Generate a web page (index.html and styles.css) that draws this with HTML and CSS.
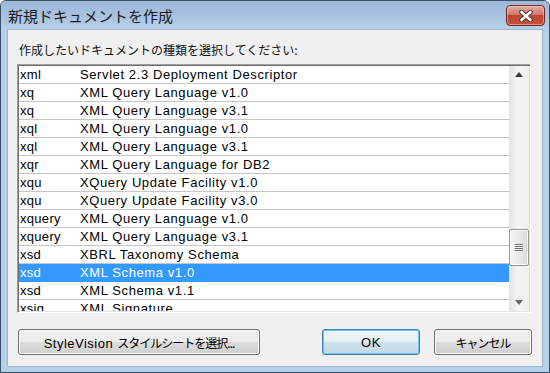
FILE: index.html
```html
<!DOCTYPE html>
<html lang="ja">
<head>
    <meta charset="UTF-8">
    <title>新規ドキュメントを作成</title>
    <link rel="stylesheet" href="styles.css">
</head>
<body>
    <div class="window">
        <div class="titlebar">
            <span class="title">新規ドキュメントを作成</span>
            <button class="close-btn" aria-label="閉じる">
                <svg width="16" height="12" viewBox="0 0 16 12">
                    <path d="M3.5 2 L12.5 10 M12.5 2 L3.5 10" stroke="#4a3a3a" stroke-width="4.6" stroke-linecap="round"/>
                    <path d="M3.5 2 L12.5 10 M12.5 2 L3.5 10" stroke="#ffffff" stroke-width="2.6" stroke-linecap="round"/>
                </svg>
            </button>
        </div>

        <div class="frame">
            <div class="client">
                <p class="prompt">作成したいドキュメントの種類を選択してください:</p>

                <div class="listbox">
                    <div class="rows">
                        <div class="row"><span class="ext">xml</span><span class="desc">Servlet 2.3 Deployment Descriptor</span></div>
                        <div class="row"><span class="ext">xq</span><span class="desc">XML Query Language v1.0</span></div>
                        <div class="row"><span class="ext">xq</span><span class="desc">XML Query Language v3.1</span></div>
                        <div class="row"><span class="ext">xql</span><span class="desc">XML Query Language v1.0</span></div>
                        <div class="row"><span class="ext">xql</span><span class="desc">XML Query Language v3.1</span></div>
                        <div class="row"><span class="ext">xqr</span><span class="desc">XML Query Language for DB2</span></div>
                        <div class="row"><span class="ext">xqu</span><span class="desc">XQuery Update Facility v1.0</span></div>
                        <div class="row"><span class="ext">xqu</span><span class="desc">XQuery Update Facility v3.0</span></div>
                        <div class="row"><span class="ext">xquery</span><span class="desc">XML Query Language v1.0</span></div>
                        <div class="row"><span class="ext">xquery</span><span class="desc">XML Query Language v3.1</span></div>
                        <div class="row"><span class="ext">xsd</span><span class="desc">XBRL Taxonomy Schema</span></div>
                        <div class="row selected"><span class="ext">xsd</span><span class="desc">XML Schema v1.0</span></div>
                        <div class="row"><span class="ext">xsd</span><span class="desc">XML Schema v1.1</span></div>
                        <div class="row"><span class="ext">xsig</span><span class="desc">XML Signature</span></div>
                    </div>
                    <div class="scrollbar">
                        <div class="arrow"><span class="tri-up"></span></div>
                        <div class="track">
                            <div class="thumb"><span class="grip"></span></div>
                        </div>
                        <div class="arrow"><span class="tri-down"></span></div>
                    </div>
                </div>

                <div class="actions">
                    <button class="btn btn-wide">StyleVision <span class="ja">スタイルシートを選択...</span></button>
                    <button class="btn btn-default">OK</button>
                    <button class="btn"><span class="ja">キャンセル</span></button>
                </div>
            </div>
        </div>
    </div>
</body>
</html>
```

FILE: styles.css
```css
body {
    margin: 0;
    background: #ffffff;
    font-family: "Liberation Sans", "Noto Sans CJK JP", sans-serif;
}

.window {
    width: 550px;
    height: 373px;
    box-sizing: border-box;
    border: 1px solid #3b4f66;
    border-radius: 6px 6px 0 0;
    background: #b7cfe8;
    display: flex;
    flex-direction: column;
    overflow: hidden;
}

.titlebar {
    height: 29px;
    flex-shrink: 0;
    display: flex;
    justify-content: space-between;
    padding: 0 4px 0 7px;
    background: linear-gradient(#9bb8d7, #aac5e2 60%, #b9d1ea);
}

.title {
    align-self: center;
    font-family: "Noto Sans CJK JP", sans-serif;
    font-size: 15px;
    line-height: 20px;
    color: #1b1b1b;
    margin-top: 1px;
}

.close-btn {
    margin-top: 4px;
    width: 39px;
    height: 21px;
    padding: 0;
    border: 1px solid #6a2a26;
    border-radius: 4px;
    background: linear-gradient(#e6aba2, #d07a6c 45%, #c0452f 50%, #c4523b);
    box-shadow: inset 0 0 0 1px rgba(255, 220, 210, 0.45);
    display: flex;
    align-items: center;
    justify-content: center;
}

.frame {
    flex: 1;
    padding: 0 7px 6px 7px;
    display: flex;
}

.client {
    flex: 1;
    background: #f0f0f0;
    box-shadow: 0 0 0 1px #9db3cb;
    padding: 0 10px 0 9px;
    display: flex;
    flex-direction: column;
}

.prompt {
    margin: 12px 0 6px 2px;
    font-family: "Noto Sans CJK JP", sans-serif;
    font-size: 12px;
    line-height: 16px;
    color: #111;
}

.listbox {
    height: 249px;
    box-sizing: border-box;
    border: 1px solid;
    border-color: #a0a0a0 #ffffff #ffffff #a0a0a0;
    box-shadow: inset 1px 1px 0 #6d6d6d, inset -1px -1px 0 #e3e3e3;
    padding: 1px;
    background: #ffffff;
    display: flex;
    margin-right: 1px;
}

.rows {
    flex: 1;
    overflow: hidden;
}

.row {
    height: 18px;
    box-sizing: border-box;
    border-bottom: 1px solid #c6c6c6;
    display: flex;
    font-size: 13px;
    line-height: 17px;
    letter-spacing: 0.6px;
    color: #000;
    white-space: nowrap;
}

.row.selected {
    background: #3399ff;
    border-bottom-color: #3399ff;
    color: #fff;
}

.ext {
    width: 60px;
    padding-left: 1px;
    letter-spacing: 0.3px;
}

.scrollbar {
    width: 20px;
    display: flex;
    flex-direction: column;
    background: linear-gradient(to right, #e4e4e4, #f4f4f4 45%, #eeeeee);
}

.arrow {
    height: 17px;
    display: flex;
    align-items: center;
    justify-content: center;
}

.tri-up {
    width: 0;
    height: 0;
    border-left: 4px solid transparent;
    border-right: 4px solid transparent;
    border-bottom: 5px solid #3a3a3a;
}

.tri-down {
    width: 0;
    height: 0;
    border-left: 4px solid transparent;
    border-right: 4px solid transparent;
    border-top: 5px solid #6a6a6a;
}

.track {
    flex: 1;
}

.thumb {
    margin-top: 146px;
    height: 37px;
    box-sizing: border-box;
    border: 1px solid #979797;
    border-radius: 2px;
    background: linear-gradient(to right, #f4f4f4, #e9e9e9 50%, #d8d8d8);
    box-shadow: inset 0 0 0 1px #fbfbfb;
    display: flex;
    align-items: center;
    justify-content: center;
}

.grip {
    width: 8px;
    height: 8px;
    background: repeating-linear-gradient(#6f6f6f 0 1px, #f6f6f6 1px 2px);
}

.actions {
    display: flex;
    margin-top: 16px;
    padding-left: 1px;
}

.btn {
    width: 98px;
    height: 26px;
    box-sizing: border-box;
    border: 1px solid #707070;
    border-radius: 3px;
    background: linear-gradient(#f2f2f2, #ebebeb 50%, #dddddd 50%, #cfcfcf);
    box-shadow: inset 0 0 0 1px #fbfbfb;
    font-family: "Liberation Sans", "Noto Sans CJK JP", sans-serif;
    font-size: 13px;
    font-weight: 400;
    letter-spacing: 0.5px;
    color: #000;
    padding: 0;
    margin-left: 14px;
}

.btn-wide {
    width: 242px;
    margin-left: 0;
    margin-right: auto;
}

.btn-default {
    border-color: #3c7fb1;
    background: linear-gradient(#eef6fb, #e2eef6 50%, #cfe2ee 50%, #c3d8e4);
    box-shadow: inset 0 0 0 1px #6cc4f0;
}

.ja {
    font-family: "Noto Sans CJK JP", sans-serif;
    font-size: 12px;
    letter-spacing: -1px;
}
```
